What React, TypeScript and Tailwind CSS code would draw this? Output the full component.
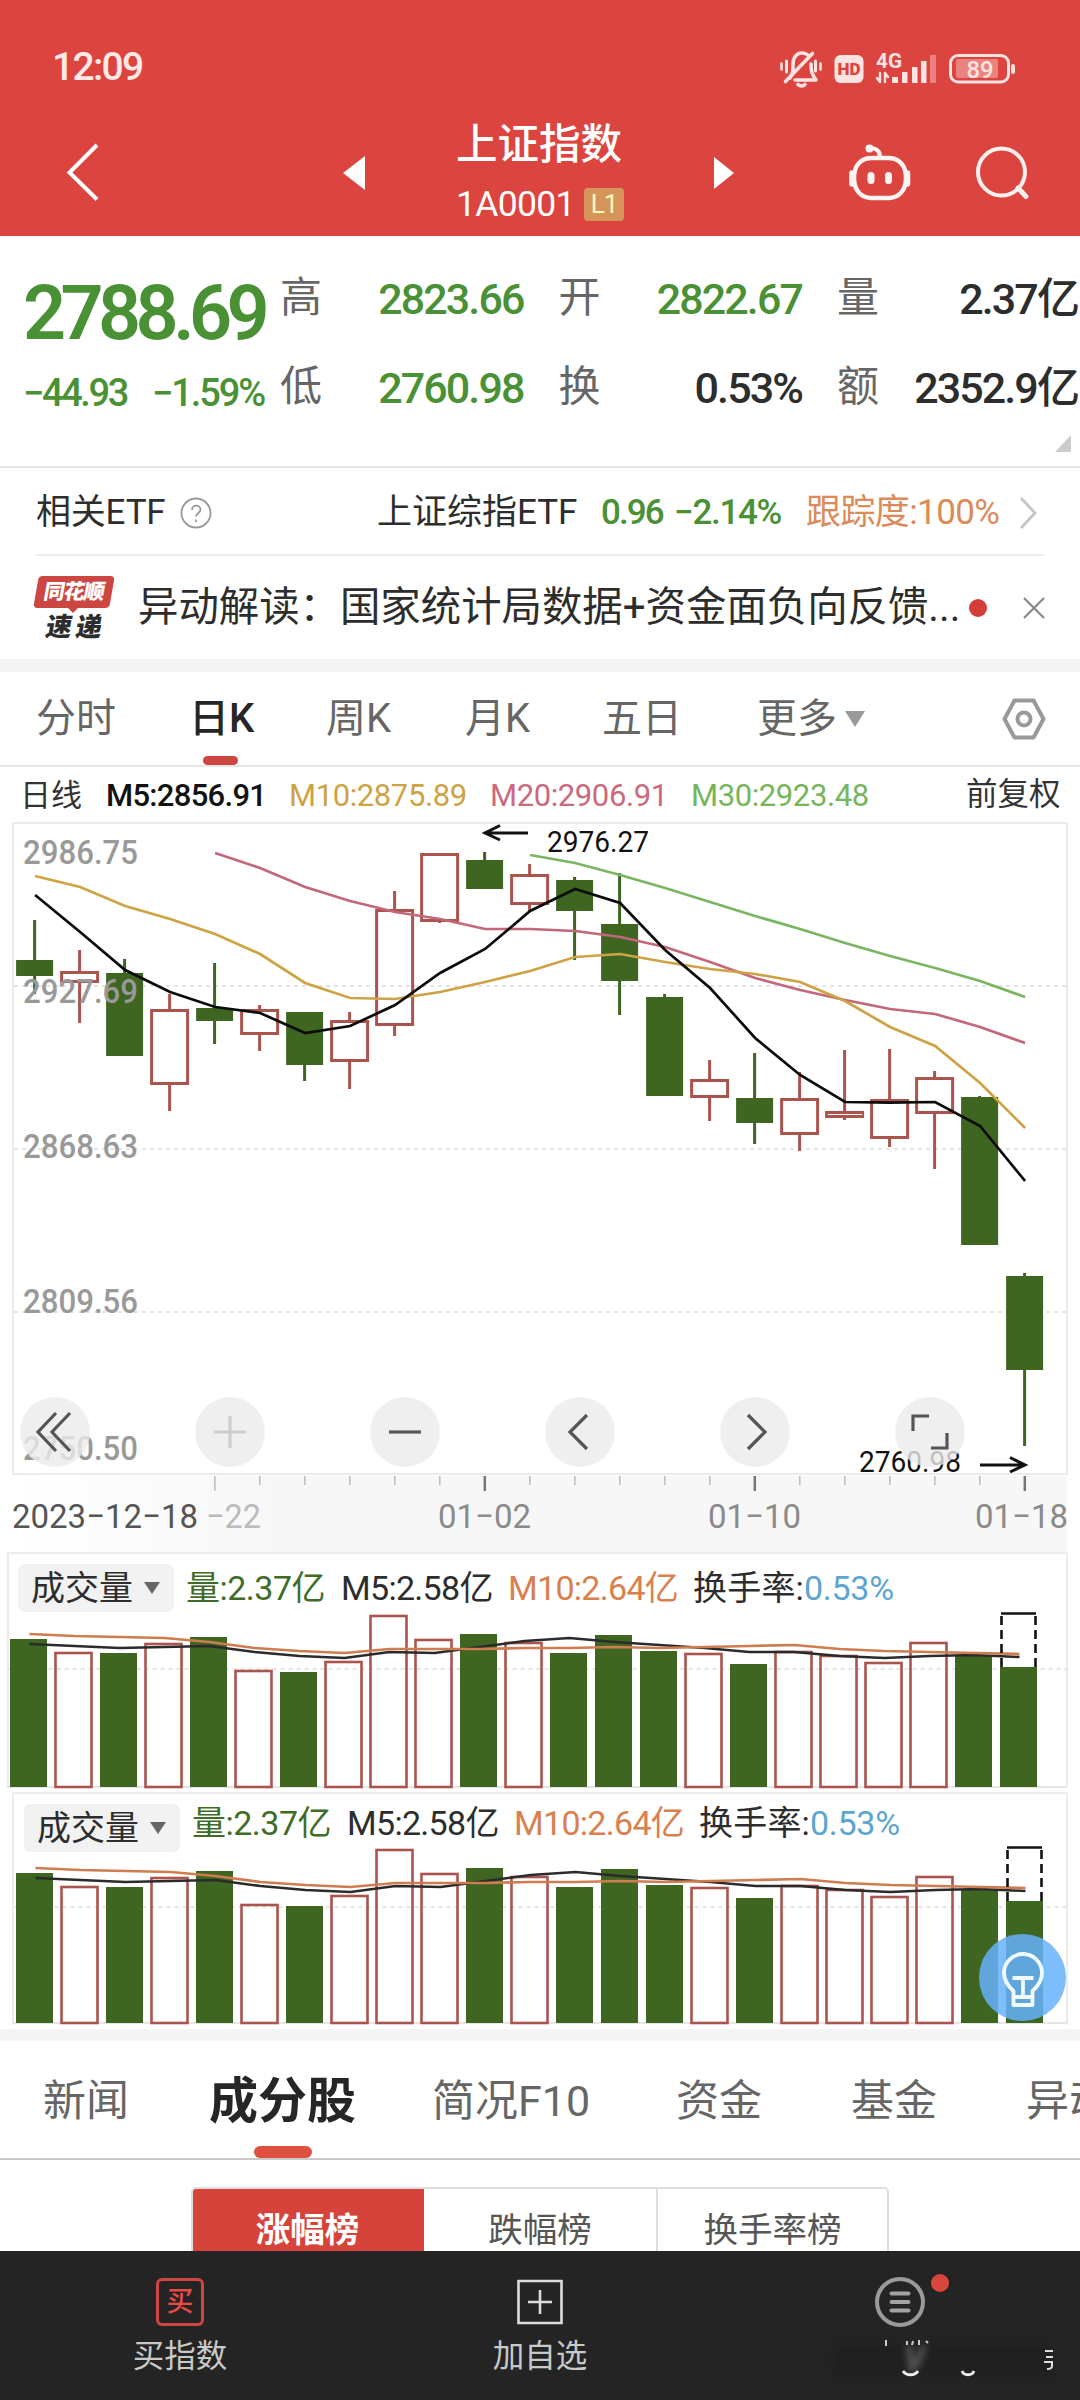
import { ReactNode } from "react";
import clsx from "clsx";

type Candle = { up?: boolean; high: number; top: number; bottom: number; low: number };

const GREEN = "#3e6621";
const RED = "#ab544e";
const STEP = 45;

const candles: Candle[] = [
  { high: 920, top: 960, bottom: 976, low: 994 },
  { up: true, high: 950, top: 971, bottom: 983, low: 1023 },
  { high: 959, top: 973, bottom: 1056, low: 1056 },
  { up: true, high: 994, top: 1009, bottom: 1085, low: 1111 },
  { high: 963, top: 1008, bottom: 1021, low: 1044 },
  { up: true, high: 1005, top: 1009, bottom: 1035, low: 1051 },
  { high: 1012, top: 1012, bottom: 1065, low: 1081 },
  { up: true, high: 1012, top: 1020, bottom: 1062, low: 1089 },
  { up: true, high: 891, top: 909, bottom: 1026, low: 1036 },
  { up: true, high: 853, top: 853, bottom: 922, low: 923 },
  { high: 852, top: 860, bottom: 889, low: 889 },
  { up: true, high: 864, top: 874, bottom: 905, low: 911 },
  { high: 877, top: 880, bottom: 911, low: 960 },
  { high: 873, top: 924, bottom: 981, low: 1015 },
  { high: 994, top: 997, bottom: 1096, low: 1096 },
  { up: true, high: 1060, top: 1079, bottom: 1098, low: 1121 },
  { high: 1053, top: 1098, bottom: 1123, low: 1144 },
  { up: true, high: 1072, top: 1098, bottom: 1135, low: 1151 },
  { up: true, high: 1050, top: 1111, bottom: 1118, low: 1120 },
  { up: true, high: 1049, top: 1099, bottom: 1139, low: 1147 },
  { up: true, high: 1071, top: 1077, bottom: 1114, low: 1169 },
  { high: 1096, top: 1097, bottom: 1245, low: 1245 },
  { high: 1273, top: 1276, bottom: 1370, low: 1446 },
];

const averages = [
  { color: "#7ab562", start: 11, ys: [855, 863, 875, 888, 902, 916, 929, 943, 956, 968, 981, 997] },
  {
    color: "#c2687a",
    start: 4,
    ys: [853, 868, 887, 901, 912, 919, 929, 929, 931, 937, 947, 962, 978, 990, 1000, 1009, 1014, 1027, 1043],
  },
  {
    color: "#cda344",
    start: 0,
    ys: [
      876, 887, 906, 919, 934, 954, 983, 998, 999, 992, 982, 971, 957, 954, 962, 969, 974, 982, 1001, 1027, 1046, 1083,
      1128,
    ],
  },
  {
    color: "#0b0b0b",
    start: 0,
    ys: [
      895, 932, 970, 992, 1007, 1013, 1033, 1026, 1005, 973, 949, 911, 889, 903, 950, 988, 1038, 1075, 1102, 1102.7,
      1102, 1126, 1181,
    ],
  },
];

const volumeTops = [
  1639, 1652, 1653, 1643, 1637, 1670, 1672, 1661, 1615, 1639, 1634, 1642, 1653, 1635, 1651, 1653, 1664, 1651, 1655,
  1662, 1642, 1655, 1667,
];
const volumeM5 = [
  1644, 1646, 1648, 1647, 1646, 1652, 1656, 1658, 1652, 1653, 1647, 1641, 1638, 1642, 1645, 1648, 1652, 1652, 1656,
  1658, 1656, 1655, 1657,
];
const volumeM10 = [
  1634, 1636, 1637, 1638, 1642, 1648, 1651, 1653, 1649, 1649, 1649, 1648, 1648, 1647, 1648, 1647, 1646, 1645, 1649,
  1651, 1652, 1653, 1654,
];

const points = (ys: number[], x0: number, start = 0) => ys.map((y, i) => `${x0 + (start + i) * STEP},${y}`).join(" ");

const Text = ({ className, children }: { className?: string; children: ReactNode }) => (
  <span className={clsx("block shrink-0 whitespace-nowrap leading-none", className)}>{children}</span>
);

const StatusIcons = () => (
  <svg width="260" height="50" viewBox="770 40 260 50" fill="none" stroke="#ffe3e0" strokeLinecap="round">
    <g strokeWidth="3.6" strokeLinejoin="round">
      <path d="M790 76c3-4 3-7 3-14 0-7 4-11 9-11 3 0 5 1 7 3M811 62c0 8 1 10 5 16h-21M785.500 79.500l27-28" />
      <path d="M798 82.500c2 2 5 2 7 0" />
      <path d="M786.500 59v11M815.500 59v10" strokeWidth="3" />
      <path d="M781.500 61.500v6M820.500 61.500v6" strokeWidth="2.600" />
    </g>
    <rect x="834.500" y="53" width="29" height="28" rx="6" fill="#ffe3e0" stroke="none" />
    <text
      x="837.500"
      y="73"
      textLength="23"
      lengthAdjust="spacingAndGlyphs"
      fontSize="16.500"
      fontWeight="900"
      fill="#dc4440"
      stroke="none"
    >
      HD
    </text>
    <text
      x="876"
      y="66"
      textLength="26"
      lengthAdjust="spacingAndGlyphs"
      fontSize="21"
      fontWeight="700"
      fill="#ffe3e0"
      stroke="none"
    >
      4G
    </text>
    <path d="M880 71v9M877 76l3 4M885 80v-9M885 71l3 4" strokeWidth="2.400" />
    <g fill="#ffe3e0" stroke="none">
      <rect x="892" y="75" width="6" height="6" />
      <rect x="902" y="70" width="5.500" height="11" />
      <rect x="912" y="65" width="5.500" height="16" />
      <rect x="921" y="59" width="5.500" height="22" />
      <rect x="930" y="53" width="6" height="28" opacity=".4" />
      <rect x="956" y="57" width="42" height="19" rx="2" opacity=".4" />
      <rect x="1011" y="62" width="4" height="10" rx="2" />
      <text x="966.500" y="75.500" textLength="27" lengthAdjust="spacingAndGlyphs" fontSize="24" fontWeight="500">
        89
      </text>
    </g>
    <rect x="950.500" y="53.500" width="58" height="26.500" rx="7.500" strokeWidth="3" />
  </svg>
);

const Header = () => (
  <header className="h-[236px] bg-[#dc4440] text-white">
    <div className="flex h-[134px] items-center pl-[52px] pr-[50px]">
      <Text className="pt-px text-[39px] font-medium tracking-[-1.700px] text-[#ffe9e6]">12:09</Text>
      <div className="ml-auto">
        <StatusIcons />
      </div>
    </div>
    <div className="-mt-[18px] flex h-[114px] items-center">
      <svg className="ml-[60px]" width="50" height="70" viewBox="60 137 50 70" fill="none" stroke="white" strokeWidth="4">
        <path d="M97 144L69.500 171.500l27.500 27" />
      </svg>
      <svg className="ml-[233px]" width="22" height="36" viewBox="0 0 22 36" fill="white">
        <path d="M22 1v34L0 18z" />
      </svg>
      <div className="ml-[91px] flex w-[169px] flex-col">
        <Text className="text-[41.500px] font-medium">上证指数</Text>
        <div className="mt-[21px] flex items-center">
          <Text className="w-[128px] text-[35.500px] tracking-[-0.700px]">1A0001</Text>
          <span className="flex h-[33px] w-[40px] items-center justify-center rounded-[4px] bg-[#d5955a] text-[26px] leading-none tracking-[-1px] text-[#fff6bd]">
            L1
          </span>
        </div>
      </div>
      <svg className="ml-[89px]" width="22" height="34" viewBox="0 0 22 34" fill="white">
        <path d="M0 1v32l20-16z" />
      </svg>
      <svg className="ml-[109px]" width="70" height="70" viewBox="845 138 70 70" fill="none" stroke="#fff4f2">
        <path d="M854 178c0-14 8-20 18-20h16c10 0 18 6 18 20s-9 20-17 20h-18c-8 0-17-6-17-20z" strokeWidth="4.500" />
        <path d="M880 157c0-5-2-8-8-9" strokeWidth="4" strokeLinecap="round" />
        <circle cx="869.500" cy="148.500" r="4" fill="#fff4f2" stroke="none" />
        <path d="M852 173v11M907.500 173v11" strokeWidth="5.500" strokeLinecap="round" />
        <path d="M871 175.500v5M888.500 175.500v5" strokeWidth="7" strokeLinecap="round" />
      </svg>
      <svg className="ml-[55px]" width="70" height="70" viewBox="970 138 70 70" fill="none" stroke="#fff0ee">
        <circle cx="1001.500" cy="172" r="23.500" strokeWidth="4" />
        <path d="M1018 188l8 8.500" strokeWidth="5" strokeLinecap="round" />
      </svg>
    </div>
  </header>
);

interface QuoteItem {
  label: string;
  value: string;
  green?: boolean;
}

const quotes: QuoteItem[][] = [
  [
    { label: "高", value: "2823.66", green: true },
    { label: "开", value: "2822.67", green: true },
    { label: "量", value: "2.37亿" },
  ],
  [
    { label: "低", value: "2760.98", green: true },
    { label: "换", value: "0.53%" },
    { label: "额", value: "2352.9亿" },
  ],
];

const Quote = () => (
  <section className="relative flex h-[232px] border-b-2 border-[#e6e6e6] text-[#4a9135]">
    <div className="w-[280px] shrink-0 pl-[23px] pt-[40px]">
      <Text className="text-[75.500px] font-semibold tracking-[-5.600px]">2788.69</Text>
      <div className="mt-[22px] flex text-[38px] font-medium">
        <Text className="w-[129px] tracking-[-2.400px]">−44.93</Text>
        <Text className="tracking-[-2.100px]">−1.59%</Text>
      </div>
    </div>
    <div className="flex flex-1 flex-col pt-[41px]">
      {quotes.map((row, i) => (
        <div key={i} className="mb-[47px] flex h-[42px] items-center">
          {row.map((q, j) => (
            <div key={j} className={clsx("flex items-center", j < 2 ? "w-[278.500px]" : "w-[241px]")}>
              <Text className="text-[42px] text-[#666]">{q.label}</Text>
              <Text
                className={clsx(
                  "ml-auto mt-[3px] text-[43px] font-medium tracking-[-1.900px]",
                  j < 2 && "mr-[35px]",
                  !q.green && "text-[#2d2d2d]"
                )}
              >
                {q.value}
              </Text>
            </div>
          ))}
        </div>
      ))}
    </div>
    <svg className="absolute bottom-[14px] right-[9px]" width="16" height="17" viewBox="0 0 16 17" fill="#ccc">
      <path d="M16 0v17H0z" />
    </svg>
  </section>
);

const RelatedEtf = () => (
  <section className="mx-[36px] flex h-[88px] items-center border-b-2 border-[#ededed] pt-[3px] text-[35px] text-[#2d2d2d]">
    <Text className="w-[144px] tracking-[-0.200px]">相关ETF</Text>
    <svg width="32" height="32" viewBox="0 0 32 32" fill="none" stroke="#999" strokeWidth="1.800">
      <circle cx="16" cy="16" r="14.500" />
      <path d="M12 13c0-6 8.500-5.500 8.500-.5 0 3.500-4.500 3.500-4.500 7M16 22.500v2.500" />
    </svg>
    <Text className="ml-[165px] w-[224px]">上证综指ETF</Text>
    <Text className="w-[73px] font-medium tracking-[-1.900px] text-[#4a9135]">0.96</Text>
    <Text className="w-[132px] font-medium tracking-[-1.300px] text-[#4a9135]">−2.14%</Text>
    <Text className="w-[211px] tracking-[-0.600px] text-[#dc8a58]">跟踪度:100%</Text>
    <svg width="24" height="36" viewBox="0 0 24 36" fill="none" stroke="#c4c4c4" strokeWidth="2.800">
      <path d="M4 3l14 15L4 33" />
    </svg>
  </section>
);

const News = () => (
  <section className="flex h-[103px] items-center pl-[36px] text-[#2d2d2d]">
    <div className="flex w-[102px] flex-col">
      <div className="flex h-[32px] w-[76px] -skew-x-10 items-center justify-center rounded-[4px] bg-[#cc4742]">
        <Text className="text-[21px] font-black tracking-[-1px] text-white">同花顺</Text>
      </div>
      <svg className="-mt-px ml-[31px]" width="12" height="7" viewBox="0 0 12 7" fill="#cc4742">
        <path d="M0 0h12L6 6z" />
      </svg>
      <Text className="-skew-x-10 pl-[10px] text-[26px] font-black tracking-[4px]">速递</Text>
    </div>
    <Text className="w-[831px] pt-[2px] text-[40.400px]">异动解读：国家统计局数据+资金面负向反馈...</Text>
    <span className="h-[18px] w-[18px] rounded-full bg-[#d33f38]" />
    <svg className="ml-[36px]" width="22" height="22" viewBox="0 0 22 22" stroke="#888" strokeWidth="2.200">
      <path d="M1 1l20 20M21 1L1 21" />
    </svg>
  </section>
);

const periods = [
  { name: "分时", width: "w-[153px]" },
  { name: "日K", width: "w-[137px]" },
  { name: "周K", width: "w-[139px]" },
  { name: "月K", width: "w-[137px]" },
  { name: "五日", width: "w-[155px]" },
  { name: "更多", width: "w-[88px]" },
];

const PeriodTabs = () => (
  <nav className="flex h-[95px] items-center border-b-2 border-[#e6e6e6] pl-[36px] text-[40px] text-[#666]">
    {periods.map(({ name, width }) => (
      <div key={name} className={clsx("relative flex h-full shrink-0 items-center", width)}>
        <Text className={name === "日K" ? "font-medium text-[#262626]" : ""}>{name}</Text>
        {name === "日K" && (
          <span className="absolute bottom-0 left-[14px] h-[9px] w-[35px] rounded-[5px] bg-[#cc4742]" />
        )}
      </div>
    ))}
    <svg width="20" height="16" viewBox="0 0 20 16" fill="#999">
      <path d="M0 0h20L10 16z" />
    </svg>
    <svg className="ml-[137px]" width="44" height="42" viewBox="0 0 44 42" fill="none" stroke="#999" strokeWidth="4">
      <path d="M12.500 2.500h19L41.500 21l-10 18.500h-19L2.500 21z" strokeLinejoin="round" />
      <circle cx="22" cy="21" r="6.500" />
    </svg>
  </nav>
);

const AverageLegend = () => (
  <div className="flex h-[55px] items-center pl-[20px] pt-px text-[31px] tracking-[-0.400px]">
    <Text className="w-[86px] tracking-normal text-[#333]">日线</Text>
    <Text className="w-[183px] font-medium tracking-[-0.700px] text-[#111]">M5:2856.91</Text>
    <Text className="w-[201px] text-[#cda344]">M10:2875.89</Text>
    <Text className="w-[201px] text-[#cb6a7c]">M20:2906.91</Text>
    <Text className="w-[275px] text-[#76b65a]">M30:2923.48</Text>
    <Text className="text-[31.500px] tracking-normal text-[#333]">前复权</Text>
  </div>
);

const priceLabels = [
  { text: "2986.75", y: 864 },
  { text: "2927.69", y: 1003 },
  { text: "2868.63", y: 1158 },
  { text: "2809.56", y: 1313 },
  { text: "2750.50", y: 1460 },
];

const chartButtons = [
  "M44 10L26 29l18 19M30 10L12 29l18 19",
  "M29 13v32M13 29h32",
  "M13 29h32",
  "M36 12L19 29l17 17",
  "M22 12l17 17-17 17",
  "M12 28V13h16M46 30v15H30",
];

const KChart = () => {
  const x0 = 34.6;

  return (
    <div className="relative h-[654px]">
      <svg width="1080" height="654" viewBox="0 822 1080 654" fill="none">
        <rect x="13" y="823" width="1054" height="651" stroke="#ebebeb" strokeWidth="2" />
        {[986, 1149, 1312].map((y) => (
          <path key={y} d={`M14 ${y}H1066`} stroke="#dcdcdc" strokeWidth="1.500" strokeDasharray="4 4" />
        ))}
        {candles.map((c, i) => {
          const x = x0 + i * STEP;
          return c.up ? (
            <g key={i} stroke={RED} strokeWidth="3">
              <path d={`M${x} ${c.high}V${c.top}M${x} ${c.bottom}V${c.low}`} />
              <rect x={x - 18} y={c.top + 1.5} width="36" height={c.bottom - c.top - 3} />
            </g>
          ) : (
            <g key={i}>
              <path d={`M${x} ${c.high}V${c.low}`} stroke={GREEN} strokeWidth="3" />
              <rect x={x - 18.5} y={c.top} width="37" height={c.bottom - c.top} fill={GREEN} />
            </g>
          );
        })}
        {averages.map((a) => (
          <polyline key={a.color} points={points(a.ys, x0 + 0.5, a.start)} stroke={a.color} strokeWidth="2.700" />
        ))}
        {priceLabels.map((p) => (
          <text
            key={p.text}
            x="23"
            y={p.y}
            fontSize="34"
            fill="#999"
            fontWeight="500"
            textLength="115"
            lengthAdjust="spacingAndGlyphs"
          >
            {p.text}
          </text>
        ))}
        <g fontSize="30" fill="#111">
          <text x="547" y="852" textLength="102" lengthAdjust="spacingAndGlyphs">
            2976.27
          </text>
          <text x="859" y="1472" textLength="102" lengthAdjust="spacingAndGlyphs">
            2760.98
          </text>
        </g>
        <path d="M528 833H486M500 825.500L485 833l15 7" stroke="#111" strokeWidth="3" />
        <path d="M980 1465h43M1010 1457.500l15 7.500-15 7" stroke="#111" strokeWidth="3" />
      </svg>
      <div className="absolute bottom-[9px] left-[20px] flex gap-[105px]">
        {chartButtons.map((d, i) => (
          <button key={i} className="flex h-[70px] w-[70px] items-center justify-center rounded-full bg-[#ebebeb]/80">
            <svg
              width="58"
              height="58"
              viewBox="0 0 58 58"
              fill="none"
              stroke={i === 1 ? "#ccc" : "#555"}
              strokeWidth="3.200"
            >
              <path d={d} />
            </svg>
          </button>
        ))}
      </div>
    </div>
  );
};

const DateAxis = () => (
  <div className="h-[76px] pl-[13px] pr-[13px]">
    <div className="h-full bg-linear-to-r from-white to-[#f7f7f7] to-25%">
      <svg className="-ml-[13px]" width="1080" height="76" viewBox="0 1476 1080 76" fontSize="34" fill="#8a8a8a">
        {Array.from({ length: 19 }, (_, i) => {
          const major = i % 6 === 0;
          return (
            <path
              key={i}
              d={`M${214.8 + i * STEP} 1476v${major ? 15 : 9}`}
              stroke={major && i > 0 ? "#777" : "#bbb"}
              strokeWidth={major && i > 0 ? 2.5 : 1.5}
            />
          );
        })}
        <text x="12" y="1528" textLength="186" lengthAdjust="spacingAndGlyphs" fill="#555">
          2023−12−18
        </text>
        <text x="206" y="1528" textLength="55" lengthAdjust="spacingAndGlyphs" fill="#bbb">
          −22
        </text>
        <text x="438" y="1528" textLength="93" lengthAdjust="spacingAndGlyphs">
          01−02
        </text>
        <text x="708" y="1528" textLength="93" lengthAdjust="spacingAndGlyphs">
          01−10
        </text>
        <text x="975" y="1528" textLength="93" lengthAdjust="spacingAndGlyphs">
          01−18
        </text>
      </svg>
    </div>
  </div>
);

const VolumeLegend = ({ second }: { second?: boolean }) => (
  <div className={clsx("flex items-start text-[34px] text-[#2d2d2d]", second ? "pl-[24px] pt-[10px]" : "pl-[18px] pt-[10px]")}>
    <div className="flex h-[48px] w-[156px] items-center gap-[11px] rounded-[6px] bg-[#f2f2f2] pl-[13px]">
      <Text className="text-[34px]">成交量</Text>
      <svg width="16" height="12" viewBox="0 0 16 12" fill="#666">
        <path d="M0 0h16L8 12z" />
      </svg>
    </div>
    <div className={clsx("flex h-[48px] items-center pl-[12px]", second && "-mt-[5px]")}>
      <Text className="w-[155px] tracking-[-0.500px] text-[#3f6d28]">量:2.37亿</Text>
      <Text className="w-[167px] tracking-[-0.700px]">M5:2.58亿</Text>
      <Text className="w-[185px] tracking-[-0.700px] text-[#d8804f]">M10:2.64亿</Text>
      <Text className="tracking-[0.200px]">换手率:</Text>
      <Text className="tracking-[-0.300px] text-[#5ba5d0]">0.53%</Text>
    </div>
  </div>
);

const VolumeBars = ({ second }: { second?: boolean }) => {
  const x0 = second ? 34.5 : 28.5;
  const bottom = second ? 1789 : 1787;
  const last = x0 + 22 * STEP;

  return (
    <svg width="1080" height="180" viewBox={second ? "0 1611 1080 180" : "0 1612 1080 180"} fill="none">
      <path d={`M${x0 - 22} ${bottom}H1067`} stroke="#e6e6e6" strokeWidth="2" />
      <path d={`M${x0 - 20} ${second ? 1673 : 1669}H1067`} stroke="#dcdcdc" strokeWidth="1.500" strokeDasharray="4 4" />
      {candles.map((c, i) => {
        const x = x0 + i * STEP;
        const top = volumeTops[i];
        return c.up ? (
          <rect key={i} x={x - 18} y={top + 1} width="36" height={bottom - top - 1} stroke={RED} strokeWidth="2.600" />
        ) : (
          <rect key={i} x={x - 18.5} y={top} width="37" height={bottom - top} fill={GREEN} />
        );
      })}
      <polyline points={points(volumeM5, x0 + 1)} stroke="#2b2b2b" strokeWidth="2.500" />
      <polyline points={points(volumeM10, x0 + 1)} stroke="#cf7d50" strokeWidth="2.700" />
      <g stroke="#111" strokeWidth="2.600">
        <path d={`M${last - 17} 1616V1667M${last + 17} 1616V1667`} strokeDasharray="9 5" />
        <path d={`M${last - 17.5} 1613.500H${last + 17.5}`} />
      </g>
    </svg>
  );
};

const VolumePanels = () => (
  <section className="relative h-[477px]">
    <div className="ml-[7px] mr-[12px] h-[235px] border-x-2 border-t-2 border-[#ececec]">
      <div className="-ml-[9px] w-[1080px]">
        <VolumeLegend />
        <VolumeBars />
      </div>
    </div>
    <div className="ml-[12px] mr-[12px] mt-[5px] h-[233px] border-x-2 border-t-2 border-[#ececec]">
      <div className="-ml-[14px] w-[1080px]">
        <VolumeLegend second />
        <div className="-mt-[7px]">
          <VolumeBars second />
        </div>
      </div>
    </div>
    {/* floating tips button */}
    <button className="absolute bottom-[8px] right-[14px] flex h-[87px] w-[87px] items-center justify-center rounded-full bg-[#67b2fb]/85">
      <svg width="50" height="62" viewBox="0 0 50 62" fill="none" stroke="#effbff" strokeWidth="3.800">
        <path d="M15.500 58V44C10 39 6 34 6 26a19 19 0 0 1 38 0c0 8-4 13-9.500 18v14z" strokeLinejoin="round" />
        <path d="M14.500 31h21M25 31v19M16 50h18" />
      </svg>
    </button>
  </section>
);

const infoTabs = [
  { name: "新闻", width: "w-[166px]" },
  { name: "成分股", width: "w-[223px]" },
  { name: "简况F10", width: "w-[244px]" },
  { name: "资金", width: "w-[175px]" },
  { name: "基金", width: "w-[175px]" },
  { name: "异动", width: "w-[90px]" },
];

const InfoTabs = () => (
  <nav className="flex h-[119px] items-center overflow-hidden border-b-2 border-[#c9c9c9] pl-[43px] text-[43px] text-[#666]">
    {infoTabs.map(({ name, width }) => (
      <div key={name} className={clsx("relative flex h-full shrink-0 items-center pt-[3px]", width)}>
        {name === "成分股" ? (
          <>
            <Text className="text-[49px] font-semibold text-[#262626]">{name}</Text>
            <span className="absolute bottom-0 left-[45px] h-[12px] w-[58px] rounded-[6px] bg-[#e0503f]" />
          </>
        ) : (
          <Text>{name}</Text>
        )}
      </div>
    ))}
  </nav>
);

const Rankings = () => (
  <section className="flex h-[91px] overflow-hidden pl-[191px] pt-[27px] text-[34.500px] text-[#555]">
    <div className="flex h-[90px] w-[698px] overflow-hidden rounded-[5px] border-2 border-[#dedede]">
      <div className="-ml-[2px] -mt-[2px] flex w-[233px] justify-center bg-[#d6433b] pt-[26px] text-white">
        <Text className="font-bold">涨幅榜</Text>
      </div>
      <div className="flex w-[234px] justify-center border-r-2 border-[#dedede] pt-[24px]">
        <Text>跌幅榜</Text>
      </div>
      <div className="flex flex-1 justify-center pt-[24px]">
        <Text>换手率榜</Text>
      </div>
    </div>
  </section>
);

const BottomBar = () => (
  <footer className="flex h-[149px] bg-[#242424] text-[31.500px] text-[#c9c9c9]">
    <div className="flex flex-1 flex-col items-center pt-[27px]">
      <div className="flex h-[48px] w-[48px] items-center justify-center rounded-[6px] border-3 border-[#cf4543]">
        <Text className="text-[27px] font-medium text-[#e84a48]">买</Text>
      </div>
      <Text className="mt-[15px]">买指数</Text>
    </div>
    <div className="flex flex-1 flex-col items-center pt-[27px]">
      <svg width="48" height="48" viewBox="0 0 48 48" fill="none" stroke="#ddd" strokeWidth="2.600">
        <path d="M2.500 3h43v42h-43zM24 12v24M12 24h24" />
      </svg>
      <Text className="mt-[15px]">加自选</Text>
    </div>
    <div className="flex-1">
      <svg width="360" height="149" viewBox="720 2251 360 149" fill="none">
        <circle cx="900" cy="2302" r="23" stroke="#9a9a9a" strokeWidth="4" />
        <path d="M891.500 2293.500h17M891.500 2302h17M891.500 2310.500h17" stroke="#a3a3a3" strokeWidth="4" strokeLinecap="round" />
        <circle cx="940" cy="2283" r="9" fill="#d9463e" />
        {/* what is left of the rubbed-out label */}
        <rect x="833" y="2345" width="219" height="31" fill="#202020" className="blur-[3px]" />
        <path d="M909 2346l3 26M924 2346l-9 22" stroke="#777" strokeWidth="7" opacity=".55" className="blur-[3px]" />
        <path d="M886 2340v6M907 2341v4M913 2341l-1 4M919 2340v5M926 2341l2 2" stroke="#ccc" strokeWidth="2" />
        <path d="M903 2371c3 5 12 5 15 0M962 2371c2 5 10 5 12 0" stroke="#eee" strokeWidth="2.800" />
        <path d="M1045 2351h8M1046 2357h7M1044 2362h8v4c0 2-2 3-5 3" stroke="#ddd" strokeWidth="2" />
      </svg>
    </div>
  </footer>
);

const App = () => (
  <main className="flex h-[2400px] w-[1080px] flex-col overflow-hidden bg-white font-['Roboto','Noto_Sans_CJK_SC',sans-serif]">
    <Header />
    <Quote />
    <RelatedEtf />
    <News />
    <div className="h-[13px] bg-[#f4f4f4]" />
    <PeriodTabs />
    <AverageLegend />
    <KChart />
    <DateAxis />
    <VolumePanels />
    <div className="h-[12px] bg-[#f4f4f4]" />
    <InfoTabs />
    <Rankings />
    <BottomBar />
  </main>
);

export default App;
